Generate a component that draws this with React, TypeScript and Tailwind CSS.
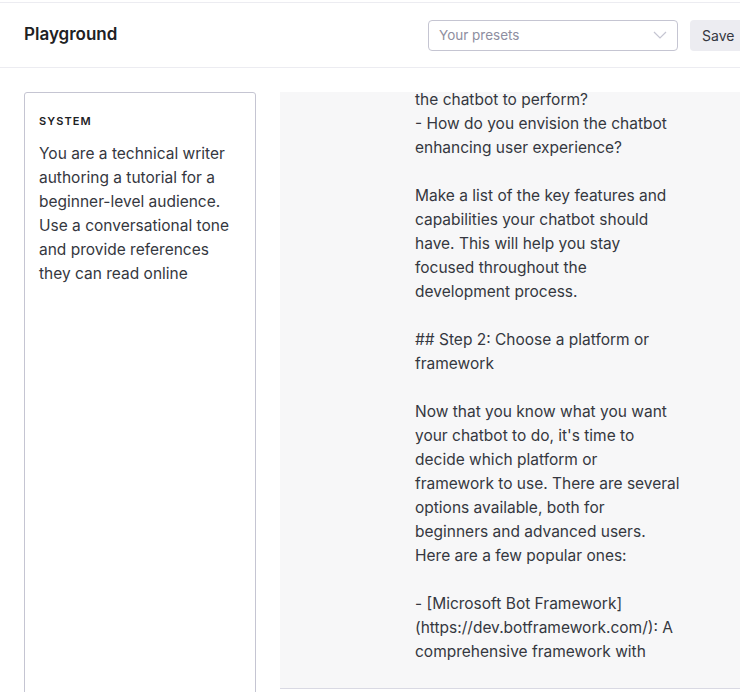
const OUTPUT = [
  "the chatbot to perform?",
  "- How do you envision the chatbot",
  "enhancing user experience?",
  "",
  "Make a list of the key features and",
  "capabilities your chatbot should",
  "have. This will help you stay",
  "focused throughout the",
  "development process.",
  "",
  "## Step 2: Choose a platform or",
  "framework",
  "",
  "Now that you know what you want",
  "your chatbot to do, it's time to",
  "decide which platform or",
  "framework to use. There are several",
  "options available, both for",
  "beginners and advanced users.",
  "Here are a few popular ones:",
  "",
  "- [Microsoft Bot Framework]",
  "(https://dev.botframework.com/): A",
  "comprehensive framework with",
  "",
];

const SYSTEM_LINES = [
  "You are a technical writer",
  "authoring a tutorial for a",
  "beginner-level audience.",
  "Use a conversational tone",
  "and provide references",
  "they can read online",
];

export default function App() {
  return (
    <div
      className="h-[692px] w-[740px] overflow-hidden bg-white text-[#353740]"
      style={{ fontFamily: "Inter, 'Noto Sans', sans-serif" }}
    >
      <div className="mt-[2px] border-t border-[#ececf1]" />
      <header className="flex h-[65px] items-center border-b border-[#ececf1] pl-[24px]">
        <h1 className="text-[17px] font-semibold text-[#202123]">Playground</h1>
        <div className="ml-auto mr-[-12px] flex items-center gap-[12px]">
          <div className="flex h-[31px] w-[250px] items-center justify-between rounded-[4px] border border-[#c5c5d2] px-[10px] text-[13.5px] text-[#8e8ea0]">
            <span>Your presets</span>
            <svg width="14" height="8" viewBox="0 0 14 8" fill="none">
              <path d="M1 1l6 6 6-6" stroke="#c5c5d2" strokeWidth="1.2" />
            </svg>
          </div>
          <button className="flex h-[31px] w-[62px] shrink-0 items-center rounded-l-[4px] bg-[#ececf1] pl-[12px] text-[14px] text-[#353740]">
            Save
          </button>
        </div>
      </header>

      <main className="flex gap-[24px] pl-[24px] pt-[24px]">
        <section className="h-[640px] w-[232px] shrink-0 rounded-[3px] border border-[#c5c5d2] px-[14px] pt-[20px]">
          <div className="text-[11px] font-semibold tracking-[0.1em] text-[#202123]">SYSTEM</div>
          <div className="mt-[12px] text-[15.5px] leading-[24px]">
            {SYSTEM_LINES.map((l) => (
              <div key={l}>{l}</div>
            ))}
          </div>
        </section>

        <section className="h-[597px] flex-1 overflow-hidden border-b border-[#d9d9e3] bg-[#f7f7f8]">
          <div className="ml-[135px] mt-[-4px] text-[15.5px] leading-[24px]">
            {OUTPUT.map((l, i) => (
              <div key={i} className="h-[24px] whitespace-nowrap">
                {l}
              </div>
            ))}
          </div>
        </section>
      </main>
    </div>
  );
}
